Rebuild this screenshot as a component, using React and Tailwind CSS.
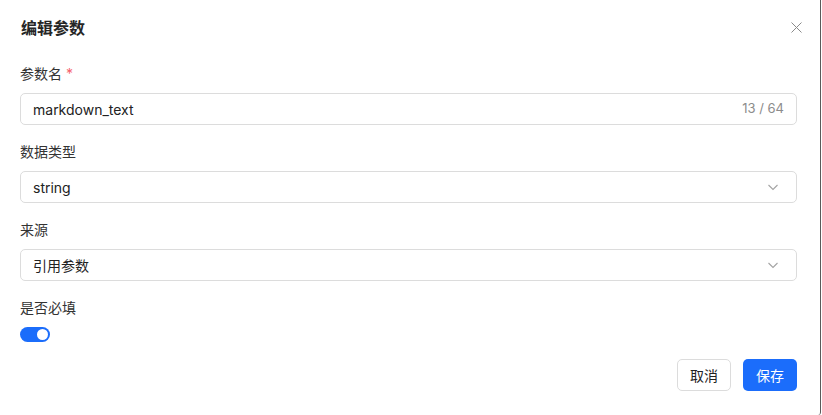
import React, { useState } from "react";

const Label = ({ children, required }) => (
  <div className="h-[22px] leading-[22px] text-[14px] text-[#333] mb-2">
    {children}
    {required && <span className="text-[#f5616c] ml-1">*</span>}
  </div>
);

const Chevron = () => (
  <svg width="14" height="14" viewBox="0 0 14 14" fill="none">
    <path d="M2.5 5l4.5 4.5L11.5 5" stroke="#a3a3a3" strokeWidth="1.1" />
  </svg>
);

const Select = ({ value }) => (
  <div className="h-8 border border-[#dcdcdc] rounded-[5px] flex items-center justify-between pl-3 pr-[16px] text-[14px] text-[#222]">
    <span>{value}</span>
    <Chevron />
  </div>
);

const App = () => {
  const [name, setName] = useState("markdown_text");
  const [required, setRequired] = useState(true);

  return (
    <div
      className="w-[821px] h-[415px] bg-white border-r border-[#5a5a5a] rounded-br-[3px]"
      style={{ fontFamily: 'Inter, "Noto Sans CJK SC", sans-serif' }}
    >
      <div className="px-5 pt-4">
        <div className="flex items-center justify-between h-6">
          <div className="text-[16px] font-semibold text-[#262626] pl-px">编辑参数</div>
          <svg width="11" height="11" viewBox="0 0 11 11" className="-mr-[2px] mb-[2px]">
            <path d="M0.5 0.5l10 10M10.5 0.5l-10 10" stroke="#8a8a8a" strokeWidth="1" />
          </svg>
        </div>

        <div className="mt-[23px] w-[777px]">
          <Label required>参数名</Label>
          <div className="h-8 border border-[#dcdcdc] rounded-[5px] flex items-center pl-3 pr-3">
            <input
              className="flex-1 outline-none text-[14px] text-[#222] bg-transparent"
              value={name}
              maxLength={64}
              onChange={(e) => setName(e.target.value)}
            />
            <span className="text-[13px] text-[#8c8c8c]">{name.length} / 64</span>
          </div>

          <div className="mt-4">
            <Label>数据类型</Label>
            <Select value="string" />
          </div>

          <div className="mt-4">
            <Label>来源</Label>
            <Select value="引用参数" />
          </div>

          <div className="mt-4">
            <Label>是否必填</Label>
            <button
              onClick={() => setRequired(!required)}
              className={`w-[30px] h-[15px] rounded-full flex items-center px-[2px] ${
                required ? "bg-[#1b6dfb] justify-end" : "bg-[#bfbfbf] justify-start"
              }`}
            >
              <span className="w-[11px] h-[11px] rounded-full bg-white" />
            </button>
          </div>

          <div className="flex justify-end gap-3 mt-[17px]">
            <button className="h-8 w-[54px] border border-[#dcdcdc] rounded-[5px] text-[14px] text-[#222] bg-white">
              取消
            </button>
            <button className="h-8 w-[54px] rounded-[5px] text-[14px] text-white bg-[#1b6dfb]">
              保存
            </button>
          </div>
        </div>
      </div>
    </div>
  );
};

export default App;
